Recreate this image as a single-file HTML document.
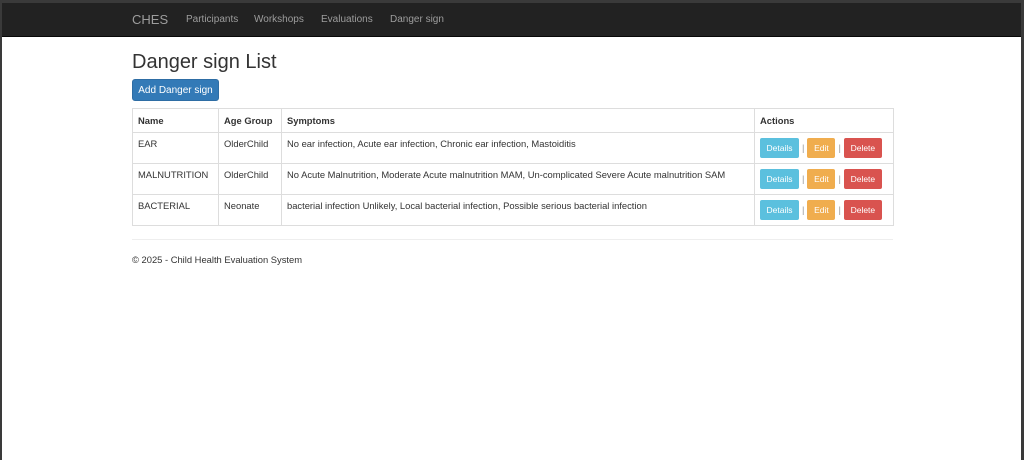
<!DOCTYPE html>
<html><head><style>
*{box-sizing:border-box}
html,body{margin:0;padding:0}
body{width:1024px;height:460px;background:#3a3a3a;font-family:"Liberation Sans",sans-serif;font-size:11px;color:#333;overflow:hidden}
.frame{position:absolute;left:2px;top:3px;width:1019px;height:457px;background:#fff}
.nav{height:34px;background:#222;border-bottom:1px solid #080808;position:relative}
.nav span{position:absolute;top:11px;color:#9d9d9d;font-size:10px}
.nav .brand{font-size:13px;top:9px}
h1{position:absolute;top:48px;margin:0;font-weight:normal;font-size:20px;color:#333}
.add{position:absolute;top:76px;left:130px;width:87px;height:22px;background:#337ab7;border:1px solid #2e6da4;border-radius:3px;color:#fff;font-size:10px;text-align:center;line-height:21px}
table{position:absolute;top:105px;left:130px;width:761px;border-collapse:collapse;table-layout:fixed}
td,th{border:1px solid #ddd;padding:0 5px;text-align:left;vertical-align:top;font-size:9.4px}
th{height:24px;line-height:23px;font-weight:bold}
td{height:31px;padding-top:5px;white-space:nowrap}
.b{display:inline-block;height:20px;line-height:20px;color:#fff;font-size:8.5px;border-radius:2px;text-align:center;margin-top:0px}
.sep{color:#999;margin:0 3px}
hr{position:absolute;top:236px;left:130px;width:761px;margin:0;border:0;border-top:1px solid #eee}
.f{position:absolute;top:251px;left:130px;font-size:9.4px}
</style></head><body><div class="frame">
<div class="nav"><span class="brand" style="left:130px">CHES</span><span style="left:184px">Participants</span><span style="left:252px">Workshops</span><span style="left:319px">Evaluations</span><span style="left:388px">Danger sign</span></div>
<h1 style="left:130px">Danger sign List</h1>
<div class="add">Add Danger sign</div>
<table>
<colgroup><col style="width:86px"><col style="width:63px"><col style="width:473px"><col style="width:139px"></colgroup>
<tr><th>Name</th><th>Age Group</th><th>Symptoms</th><th>Actions</th></tr>
<tr><td>EAR</td><td>OlderChild</td><td>No ear infection, Acute ear infection, Chronic ear infection, Mastoiditis</td><td><span class="b" style="background:#5bc0de;width:39px">Details</span><span class="sep">|</span><span class="b" style="background:#f0ad4e;width:28px">Edit</span><span class="sep">|</span><span class="b" style="background:#d9534f;width:38px">Delete</span></td></tr>
<tr><td>MALNUTRITION</td><td>OlderChild</td><td>No Acute Malnutrition, Moderate Acute malnutrition MAM, Un-complicated Severe Acute malnutrition SAM</td><td><span class="b" style="background:#5bc0de;width:39px">Details</span><span class="sep">|</span><span class="b" style="background:#f0ad4e;width:28px">Edit</span><span class="sep">|</span><span class="b" style="background:#d9534f;width:38px">Delete</span></td></tr>
<tr><td>BACTERIAL</td><td>Neonate</td><td>bacterial infection Unlikely, Local bacterial infection, Possible serious bacterial infection</td><td><span class="b" style="background:#5bc0de;width:39px">Details</span><span class="sep">|</span><span class="b" style="background:#f0ad4e;width:28px">Edit</span><span class="sep">|</span><span class="b" style="background:#d9534f;width:38px">Delete</span></td></tr>
</table>
<hr>
<div class="f">© 2025 - Child Health Evaluation System</div>
</div></body></html>
